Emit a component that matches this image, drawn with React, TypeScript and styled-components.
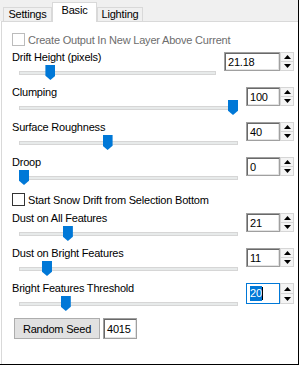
import React from "react";
import styled, { createGlobalStyle } from "styled-components";

const GlobalStyle = createGlobalStyle`
  html, body {
    margin: 0;
    padding: 0;
    background: #fff;
  }
  body {
    font-family: "Liberation Sans", Arial, sans-serif;
    font-size: 11px;
    letter-spacing: -0.2px;
    color: #000;
  }
`;

const Window = styled.div`
  width: 301px;
  height: 366px;
  box-sizing: border-box;
  padding: 0 2px 1px 0;
  background: #fff;
`;

const Frame = styled.div`
  height: 100%;
  box-sizing: border-box;
  display: flex;
  flex-direction: column;
  border-right: 1px solid #000;
  border-bottom: 1px solid #000;
  background: #fff;
`;

const TabStrip = styled.div`
  height: 21px;
  flex: none;
  display: flex;
  align-items: flex-end;
  padding-left: 3px;
  background: #f0f0f0;
`;

const Tab = styled.div<{ $active?: boolean; $width: number }>`
  position: relative;
  z-index: ${p => (p.$active ? 1 : 0)};
  box-sizing: border-box;
  width: ${p => p.$width}px;
  height: ${p => (p.$active ? 20 : 14)}px;
  margin-bottom: ${p => (p.$active ? -1 : 0)}px;
  border: 1px solid #d9d9d9;
  border-bottom: none;
  background: ${p => (p.$active ? "#fff" : "#f0f0f0")};
  text-align: center;
  line-height: ${p => (p.$active ? 15 : 13)}px;
`;

const Page = styled.div`
  flex: 1;
  margin-left: 1px;
  border-top: 1px solid #d9d9d9;
  border-left: 1px solid #d9d9d9;
  padding: 10px 4px 0 10px;
  display: flex;
  flex-direction: column;
  gap: 6px;
`;

const CheckRow = styled.label<{ $disabled?: boolean }>`
  height: 15px;
  display: flex;
  align-items: center;
  gap: 3px;
  color: ${p => (p.$disabled ? "#6d6d6d" : "#000")};
  white-space: nowrap;
  &:first-child {
    margin-bottom: -1px;
  }
`;

const Box = styled.span<{ $disabled?: boolean }>`
  width: 13px;
  height: 13px;
  box-sizing: border-box;
  border: 1px solid ${p => (p.$disabled ? "#bcbcbc" : "#333")};
  background: #fff;
`;

const SliderRow = styled.div`
  display: grid;
  grid-template-columns: 1fr auto;
  grid-template-rows: 11px 18px;
  column-gap: 8px;
`;

const Label = styled.div`
  grid-column: 1;
  grid-row: 1;
  line-height: 11px;
  white-space: nowrap;
`;

const Slider = styled.div`
  grid-column: 1;
  grid-row: 2;
  position: relative;
  margin-left: 7px;
`;

const Track = styled.div`
  margin-top: 8px;
  height: 4px;
  box-sizing: border-box;
  border: 1px solid #d6d6d6;
  background: #e7eaea;
`;

const Thumb = styled.div`
  position: absolute;
  top: 2px;
  width: 10px;
  height: 15px;
  background: #0078d7;
  clip-path: polygon(0 0, 100% 0, 100% 72%, 50% 100%, 0 72%);
`;

const Spin = styled.div`
  grid-column: 2;
  grid-row: 1 / span 2;
  align-self: start;
  display: flex;
`;

const Field = styled.div<{ $width: number; $focused?: boolean }>`
  width: ${p => p.$width}px;
  height: ${p => (p.$focused ? 21 : 19)}px;
  box-sizing: border-box;
  display: flex;
  align-items: center;
  padding-left: 3px;
  background: #fff;
  border: 1px solid ${p => (p.$focused ? "#0078d7" : "#a0a0a0")};
  box-shadow: ${p =>
    p.$focused ? "none" : "inset 1px 1px 0 #696969, inset -1px -1px 0 #e3e3e3"};
  white-space: nowrap;
`;

const Selected = styled.span`
  background: #0078d7;
  color: #fff;
  line-height: 15px;
`;

const Caret = styled.span`
  width: 1px;
  height: 13px;
  background: #000;
`;

const Arrows = styled.div`
  width: 14px;
  display: flex;
  flex-direction: column;
`;

const ArrowButton = styled.div`
  flex: 1;
  box-sizing: border-box;
  display: flex;
  align-items: center;
  justify-content: center;
  background: #f4f4f4;
  border: 1px solid #d6d6d6;
  & + & {
    border-top: none;
  }
`;

const ButtonRow = styled.div`
  display: flex;
  align-items: center;
  gap: 3px;
  margin-left: 2px;
`;

const Button = styled.div`
  width: 86px;
  height: 21px;
  box-sizing: border-box;
  border: 1px solid #adadad;
  background: #e1e1e1;
  display: flex;
  align-items: center;
  justify-content: center;
`;

const TextBox = styled(Field)`
  height: 21px;
`;

const Arrow = ({ up }: { up?: boolean }) => (
  <svg width="7" height="4" viewBox="0 0 7 4">
    <polygon points={up ? "0,4 7,4 3.5,0" : "0,0 7,0 3.5,4"} fill="#000" />
  </svg>
);

type Row = {
  label: string;
  value: number;
  text: string;
  max: number;
  width: number;
  focused?: boolean;
};

const rows: Row[] = [
  { label: "Drift Height (pixels)", value: 21.18, text: "21.18", max: 150, width: 56 },
  { label: "Clumping", value: 100, text: "100", max: 100, width: 34 },
  { label: "Surface Roughness", value: 40, text: "40", max: 100, width: 34 },
  { label: "Droop", value: 0, text: "0", max: 100, width: 34 },
  { label: "Dust on All Features", value: 21, text: "21", max: 100, width: 34 },
  { label: "Dust on Bright Features", value: 11, text: "11", max: 100, width: 34 },
  { label: "Bright Features Threshold", value: 20, text: "20", max: 100, width: 34, focused: true },
];

const SliderBlock = ({ row }: { row: Row }) => {
  const frac = row.value / row.max;
  return (
    <SliderRow>
      <Label>{row.label}</Label>
      <Slider>
        <Track />
        <Thumb style={{ left: `calc((100% - 10px) * ${frac})` }} />
      </Slider>
      <Spin>
        <Field $width={row.width} $focused={row.focused}>
          {row.focused ? (
            <>
              <Selected>{row.text}</Selected>
              <Caret />
            </>
          ) : (
            row.text
          )}
        </Field>
        <Arrows>
          <ArrowButton>
            <Arrow up />
          </ArrowButton>
          <ArrowButton>
            <Arrow />
          </ArrowButton>
        </Arrows>
      </Spin>
    </SliderRow>
  );
};

export default function App() {
  return (
    <Window>
      <GlobalStyle />
      <Frame>
        <TabStrip>
          <Tab $width={49}>Settings</Tab>
          <Tab $width={45} $active>
            Basic
          </Tab>
          <Tab $width={46}>Lighting</Tab>
        </TabStrip>
        <Page>
          <CheckRow $disabled>
            <Box $disabled />
            Create Output In New Layer Above Current
          </CheckRow>
          {rows.slice(0, 4).map(r => (
            <SliderBlock key={r.label} row={r} />
          ))}
          <CheckRow>
            <Box />
            Start Snow Drift from Selection Bottom
          </CheckRow>
          {rows.slice(4).map(r => (
            <SliderBlock key={r.label} row={r} />
          ))}
          <ButtonRow>
            <Button>Random Seed</Button>
            <TextBox $width={34}>4015</TextBox>
          </ButtonRow>
        </Page>
      </Frame>
    </Window>
  );
}
